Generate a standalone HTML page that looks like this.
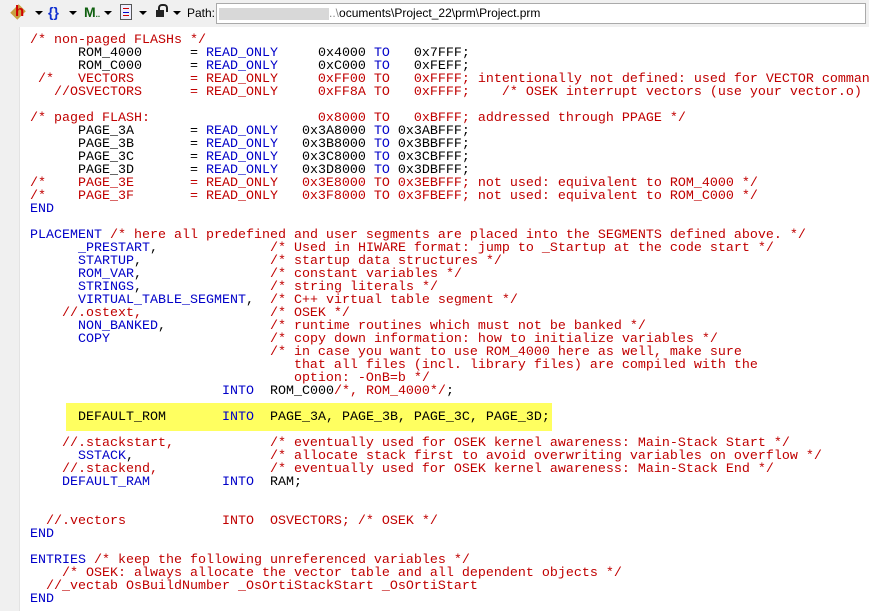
<!DOCTYPE html>
<html><head><meta charset="utf-8"><style>
html,body{margin:0;padding:0;width:869px;height:611px;overflow:hidden;background:#fff;font-family:"Liberation Sans",sans-serif}
#tb{position:absolute;left:0;top:0;width:869px;height:27px;background:#f0f0f0}
#gut{position:absolute;left:0;top:27px;width:19px;height:584px;background:#f0f0f0;border-right:1px solid #e3e3e3}
#code{position:absolute;left:30px;top:34px;margin:0;font-family:"Liberation Mono",monospace;font-size:13.33px;line-height:13px;color:#000;white-space:pre}
.r{color:#c00000}.b{color:#0000c8}
#hl{position:absolute;left:66px;top:403px;width:486px;height:28px;background:#ffff60}
.arr{position:absolute;top:11px;width:0;height:0;border-left:4px solid transparent;border-right:4px solid transparent;border-top:4px solid #000}
#path{position:absolute;left:216px;top:3px;width:648px;height:19px;border:1px solid #aaa;background:#fff;font-size:12px;line-height:19px}
</style></head><body>
<div id="tb">
 <div style="position:absolute;left:13px;top:6px;width:10px;height:12px;background:#c8a040;transform:rotate(45deg)"></div>
 <div style="position:absolute;left:15px;top:3px;font-weight:bold;color:#d00000;font-size:15px">h</div>
 <div class="arr" style="left:35px"></div>
 <div style="position:absolute;left:48px;top:4px;color:#1030d0;font-weight:bold;font-size:14px">{}</div>
 <div class="arr" style="left:69px"></div>
 <div style="position:absolute;left:84px;top:4px;color:#106010;font-weight:bold;font-size:14px">M<span style="font-size:8px">..</span></div>
 <div class="arr" style="left:104px"></div>
 <div style="position:absolute;left:120px;top:4px;width:10px;height:14px;border:1px solid #555;background:#eef"><div style="margin:3px 2px;height:1px;background:#c00"></div><div style="margin:2px 2px;height:1px;background:#00c"></div><div style="margin:2px 2px;height:1px;background:#c00"></div></div>
 <div class="arr" style="left:139px"></div>
 <div style="position:absolute;left:156px;top:10px;width:8px;height:7px;background:#222"></div>
 <div style="position:absolute;left:158px;top:4px;width:6px;height:6px;border:2px solid #222;border-bottom:none;border-radius:4px 4px 0 0"></div>
 <div class="arr" style="left:173px"></div>
 <div style="position:absolute;left:187px;top:6px;font-size:12px">Path:</div>
 <div id="path"><span style="display:inline-block;width:110px;height:12px;background:#d8d8d8;vertical-align:middle;margin-left:2px"></span><span style="color:#888">..\</span>ocuments\Project_22\prm\Project.prm</div>
</div>
<div id="gut"></div>
<div id="hl"></div>
<pre id="code"><span class="r">/* non-paged FLASHs */</span>
      ROM_4000      = <span class="b">READ_ONLY</span>     0x4000 <span class="b">TO</span>   0x7FFF;
      ROM_C000      = <span class="b">READ_ONLY</span>     0xC000 <span class="b">TO</span>   0xFEFF;
<span class="r"> /*   VECTORS       = READ_ONLY     0xFF00 TO   0xFFFF; intentionally not defined: used for VECTOR command</span>
<span class="r">   //OSVECTORS      = READ_ONLY     0xFF8A TO   0xFFFF;    /* OSEK interrupt vectors (use your vector.o) */</span>

<span class="r">/* paged FLASH:                     0x8000 TO   0xBFFF; addressed through PPAGE */</span>
      PAGE_3A       = <span class="b">READ_ONLY</span>   0x3A8000 <span class="b">TO</span> 0x3ABFFF;
      PAGE_3B       = <span class="b">READ_ONLY</span>   0x3B8000 <span class="b">TO</span> 0x3BBFFF;
      PAGE_3C       = <span class="b">READ_ONLY</span>   0x3C8000 <span class="b">TO</span> 0x3CBFFF;
      PAGE_3D       = <span class="b">READ_ONLY</span>   0x3D8000 <span class="b">TO</span> 0x3DBFFF;
<span class="r">/*    PAGE_3E       = READ_ONLY   0x3E8000 TO 0x3EBFFF; not used: equivalent to ROM_4000 */</span>
<span class="r">/*    PAGE_3F       = READ_ONLY   0x3F8000 TO 0x3FBEFF; not used: equivalent to ROM_C000 */</span>
<span class="b">END</span>

<span class="b">PLACEMENT</span> <span class="r">/* here all predefined and user segments are placed into the SEGMENTS defined above. */</span>
      <span class="b">_PRESTART</span>,              <span class="r">/* Used in HIWARE format: jump to _Startup at the code start */</span>
      <span class="b">STARTUP</span>,                <span class="r">/* startup data structures */</span>
      <span class="b">ROM_VAR</span>,                <span class="r">/* constant variables */</span>
      <span class="b">STRINGS</span>,                <span class="r">/* string literals */</span>
      <span class="b">VIRTUAL_TABLE_SEGMENT</span>,  <span class="r">/* C++ virtual table segment */</span>
<span class="r">    //.ostext,                /* OSEK */</span>
      <span class="b">NON_BANKED</span>,             <span class="r">/* runtime routines which must not be banked */</span>
      <span class="b">COPY</span>                    <span class="r">/* copy down information: how to initialize variables */</span>
<span class="r">                              /* in case you want to use ROM_4000 here as well, make sure</span>
<span class="r">                                 that all files (incl. library files) are compiled with the</span>
<span class="r">                                 option: -OnB=b */</span>
                        <span class="b">INTO</span>  ROM_C000<span class="r">/*, ROM_4000*/</span>;

      DEFAULT_ROM       <span class="b">INTO</span>  PAGE_3A, PAGE_3B, PAGE_3C, PAGE_3D;

<span class="r">    //.stackstart,            /* eventually used for OSEK kernel awareness: Main-Stack Start */</span>
      <span class="b">SSTACK</span>,                 <span class="r">/* allocate stack first to avoid overwriting variables on overflow */</span>
<span class="r">    //.stackend,              /* eventually used for OSEK kernel awareness: Main-Stack End */</span>
    <span class="b">DEFAULT_RAM</span>         <span class="b">INTO</span>  RAM;


<span class="r">  //.vectors            INTO  OSVECTORS; /* OSEK */</span>
<span class="b">END</span>

<span class="b">ENTRIES</span> <span class="r">/* keep the following unreferenced variables */</span>
<span class="r">    /* OSEK: always allocate the vector table and all dependent objects */</span>
<span class="r">  //_vectab OsBuildNumber _OsOrtiStackStart _OsOrtiStart</span>
<span class="b">END</span></pre>
</body></html>
